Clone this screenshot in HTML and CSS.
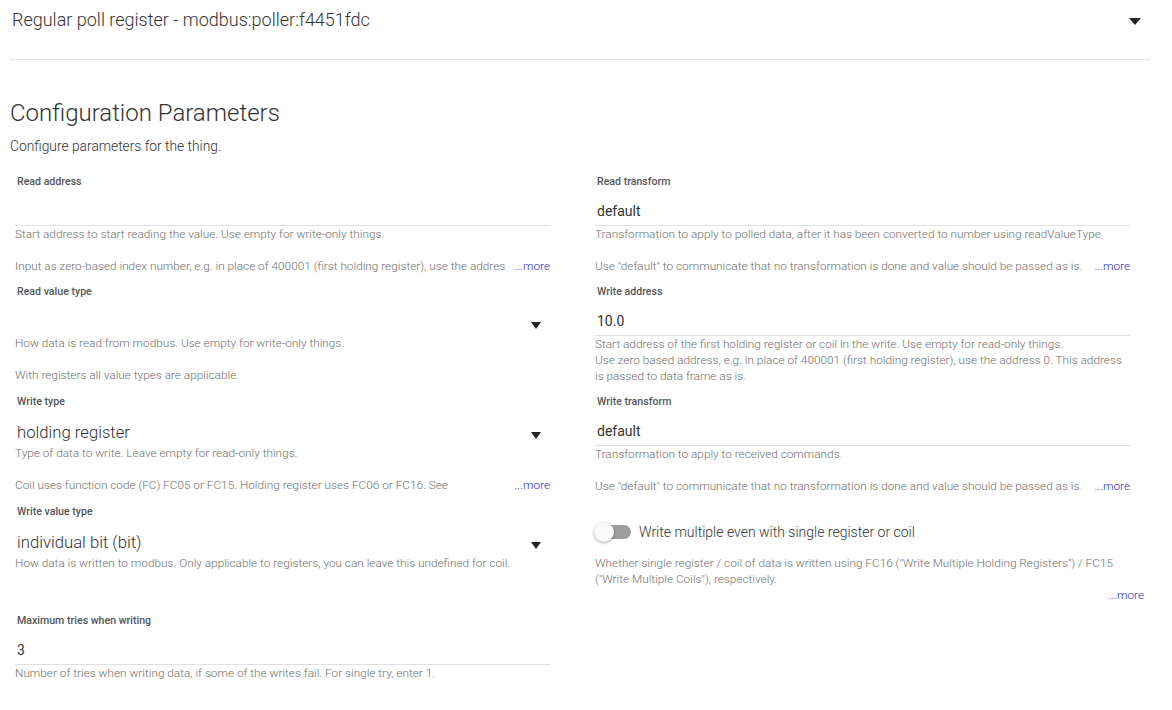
FILE: index.html
```html
<!DOCTYPE html>
<html>
<head>
<meta charset="utf-8">
<link rel="stylesheet" href="styles.css">
</head>
<body>
<div class="page">
  <div class="header">
    <span class="title">Regular poll register - modbus:poller:f4451fdc</span>
    <span class="caret big"></span>
  </div>

  <h2 class="section-title">Configuration Parameters</h2>
  <p class="section-sub">Configure parameters for the thing.</p>

  <div class="grid">
    <!-- Row 1 -->
    <div class="field">
      <div class="label">Read address</div>
      <div class="input"><span class="value"></span></div>
      <div class="desc">Start address to start reading the value. Use empty for write-only things.</div>
      <div class="desc more-row"><span class="clip">Input as zero-based index number, e.g. in place of 400001 (first holding register), use the addres</span><a class="more">...more</a></div>
    </div>
    <div class="field">
      <div class="label">Read transform</div>
      <div class="input"><span class="value">default</span></div>
      <div class="desc">Transformation to apply to polled data, after it has been converted to number using readValueType</div>
      <div class="desc more-row"><span class="clip">Use "default" to communicate that no transformation is done and value should be passed as is.</span><a class="more">...more</a></div>
    </div>

    <!-- Row 2 -->
    <div class="field">
      <div class="label">Read value type</div>
      <div class="select"><span class="svalue"></span><span class="caret"></span></div>
      <div class="desc">How data is read from modbus. Use empty for write-only things.</div>
      <div class="desc para">With registers all value types are applicable.</div>
    </div>
    <div class="field">
      <div class="label">Write address</div>
      <div class="input"><span class="value">10.0</span></div>
      <div class="desc">Start address of the first holding register or coil in the write. Use empty for read-only things.<br>Use zero based address, e.g. in place of 400001 (first holding register), use the address 0. This address is passed to data frame as is.</div>
    </div>

    <!-- Row 3 -->
    <div class="field">
      <div class="label">Write type</div>
      <div class="select"><span class="svalue">holding register</span><span class="caret"></span></div>
      <div class="desc">Type of data to write. Leave empty for read-only things.</div>
      <div class="desc more-row"><span class="clip">Coil uses function code (FC) FC05 or FC15. Holding register uses FC06 or FC16. See</span><a class="more">...more</a></div>
    </div>
    <div class="field">
      <div class="label">Write transform</div>
      <div class="input"><span class="value">default</span></div>
      <div class="desc">Transformation to apply to received commands.</div>
      <div class="desc more-row"><span class="clip">Use "default" to communicate that no transformation is done and value should be passed as is.</span><a class="more">...more</a></div>
    </div>

    <!-- Row 4 -->
    <div class="field">
      <div class="label">Write value type</div>
      <div class="select"><span class="svalue">individual bit (bit)</span><span class="caret"></span></div>
      <div class="desc">How data is written to modbus. Only applicable to registers, you can leave this undefined for coil.</div>
    </div>
    <div class="field">
      <div class="toggle-row">
        <span class="toggle"><span class="track"></span><span class="thumb"></span></span>
        <span class="toggle-label">Write multiple even with single register or coil</span>
      </div>
      <div class="desc toggle-desc">Whether single register / coil of data is written using FC16 ("Write Multiple Holding Registers") / FC15 ("Write Multiple Coils"), respectively.</div>
      <div class="desc more-end"><a class="more">...more</a></div>
    </div>

    <!-- Row 5 -->
    <div class="field">
      <div class="label">Maximum tries when writing</div>
      <div class="input"><span class="value">3</span></div>
      <div class="desc">Number of tries when writing data, if some of the writes fail. For single try, enter 1.</div>
    </div>
  </div>
</div>
</body>
</html>
```

FILE: styles.css
```css
html, body {
  margin: 0;
  padding: 0;
  background: #ffffff;
}

body {
  font-family: Roboto, "Liberation Sans", Arial, sans-serif;
  color: #333333;
}

.page {
  margin: 0 22px 0 10px;
}

.header {
  height: 59px;
  border-bottom: 1px solid #e6e6e6;
  display: flex;
  align-items: flex-start;
  justify-content: space-between;
}

.title {
  font-size: 18px;
  font-weight: 300;
  line-height: 40px;
  padding-left: 2px;
  color: #333333;
}

.caret {
  display: inline-block;
  width: 0;
  height: 0;
  border-left: 5.5px solid transparent;
  border-right: 5.5px solid transparent;
  border-top: 7px solid #222222;
}

.caret.big {
  margin-top: 18px;
  margin-right: 9px;
  border-left-width: 6px;
  border-right-width: 6px;
  border-top-width: 7px;
}

.section-title {
  margin: 37px 0 0 0;
  font-size: 24px;
  font-weight: 300;
  line-height: 32px;
  color: #333333;
}

.section-sub {
  margin: 8px 0 0 0;
  font-size: 13.8px;
  line-height: 18px;
  font-weight: 300;
  color: #333333;
}

.grid {
  margin: 16px 0 0 5px;
  display: grid;
  grid-template-columns: 535px 535px;
  column-gap: 45px;
}

.field {
  padding-bottom: 7px;
  min-width: 0;
}

.label {
  height: 22px;
  line-height: 22px;
  font-size: 10.6px;
  font-weight: 500;
  color: #555555;
  padding-left: 2px;
}

.input {
  height: 32px;
  border-bottom: 1px solid #e0e0e0;
  box-sizing: content-box;
}

.value {
  display: block;
  padding: 9px 0 0 2px;
  font-size: 14px;
  line-height: 18px;
  color: #333333;
}

.select {
  height: 32px;
  display: flex;
  justify-content: space-between;
  align-items: flex-start;
}

.svalue {
  padding: 9px 0 0 2px;
  font-size: 16.7px;
  font-weight: 300;
  line-height: 22px;
  color: #333333;
}

.select .caret {
  margin-top: 19px;
  margin-right: 9px;
}

.desc {
  font-size: 11.8px;
  font-weight: 300;
  line-height: 16px;
  color: #6f6f6f;
}

.para,
.more-row {
  margin-top: 16px;
}

.more-row {
  display: flex;
  align-items: baseline;
}

.clip {
  flex: 1;
  min-width: 0;
  white-space: nowrap;
  overflow: hidden;
  margin-right: 6px;
}

.more {
  color: #2a2ad0;
  cursor: pointer;
  flex: none;
}

.toggle-row {
  padding-top: 20px;
  height: 22px;
  display: flex;
  align-items: center;
}

.toggle {
  position: relative;
  width: 36px;
  height: 22px;
  flex: none;
}

.track {
  position: absolute;
  left: 2px;
  top: 4px;
  width: 34px;
  height: 14px;
  border-radius: 7px;
  background: #9e9e9e;
}

.thumb {
  position: absolute;
  left: -1px;
  top: 1px;
  width: 20px;
  height: 20px;
  border-radius: 50%;
  background: #fafafa;
  box-shadow: 0 1px 3px rgba(0, 0, 0, 0.35);
}

.toggle-label {
  margin-left: 8px;
  font-size: 14px;
  font-weight: 300;
  color: #333333;
}

.toggle-desc {
  margin-top: 12px;
}

.more-end {
  text-align: right;
  margin-right: -14px;
}
```
